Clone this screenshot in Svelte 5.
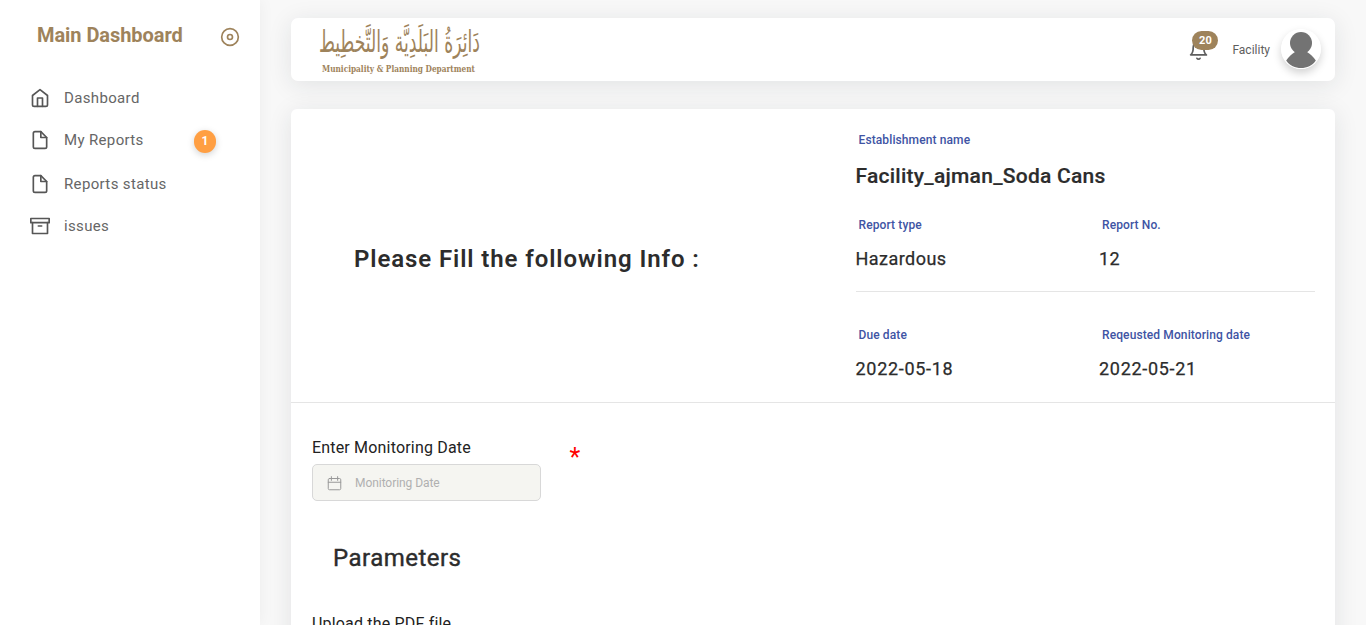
<script>
  const links = [
    { label: 'Dashboard', icon: 'home' },
    { label: 'My Reports', icon: 'file', badge: '1' },
    { label: 'Reports status', icon: 'file' },
    { label: 'issues', icon: 'archive' }
  ];
</script>

<div class="shell">
  <aside>
    <div class="brand">
      <h2>Main Dashboard</h2>
      <svg class="disc" width="20" height="20" viewBox="0 0 24 24"><circle cx="12" cy="12" r="10" /><circle cx="12" cy="12" r="3" /></svg>
    </div>
    <nav>
      {#each links as link}
        <a href="#top" class={link.icon} class:counted={link.badge}>
          <svg width="20" height="20" viewBox="0 0 24 24">
            {#if link.icon === 'home'}
              <path d="M3 9l9-7 9 7v11a2 2 0 0 1-2 2H5a2 2 0 0 1-2-2z" /><path d="M9 22V12h6v10" />
            {:else if link.icon === 'file'}
              <path d="M13 2H6a2 2 0 0 0-2 2v16a2 2 0 0 0 2 2h12a2 2 0 0 0 2-2V9z" /><path d="M13 2v7h7" />
            {:else}
              <path d="M21 8v13H3V8" /><path d="M1 3h22v5H1z" /><path d="M10 12h4" />
            {/if}
          </svg>
          <span>{link.label}</span>
          {#if link.badge}<b>{link.badge}</b>{/if}
        </a>
      {/each}
    </nav>
  </aside>

  <main>
    <header>
      <svg class="logo" width="164" height="52" viewBox="0 0 164 52">
        <text class="ar" x="1" y="0" transform="translate(0 28.5) scale(1 1.42)" textLength="161" lengthAdjust="spacingAndGlyphs" direction="rtl" text-anchor="end">دَائِرَةُ البَلَدِيَّة وَالتَّخطِيط</text>
        <text class="en" x="4" y="49" textLength="153" lengthAdjust="spacingAndGlyphs">Municipality &amp; Planning Department</text>
      </svg>
      <div class="user">
        <div class="bell">
          <svg width="21" height="21" viewBox="0 0 24 24"><path d="M18 8A6 6 0 0 0 6 8c0 7-3 9-3 9h18s-3-2-3-9" /><path d="M13.73 21a2 2 0 0 1-3.46 0" /></svg>
          <span>20</span>
        </div>
        <span class="name">Facility</span>
        <svg class="avatar" width="40" height="40" viewBox="0 0 40 40"><circle cx="20" cy="20" r="20" fill="#fff" /><g class="person"><circle cx="20" cy="14" r="11" /><path d="M5.2 31.5C7.5 28 10.5 25 14 23h12C29.5 25 32.5 28 34.8 31.5C31 37 26 39 20 39S9 37 5.2 31.5z" /></g></svg>
      </div>
    </header>

    <section class="card">
      <div class="summary">
        <h1>Please Fill the following Info :</h1>
        <div class="details">
          <div class="facility"><label>Establishment name</label><strong>Facility_ajman_Soda Cans</strong></div>
          <div class="pair first">
            <div><label>Report type</label><p>Hazardous</p></div>
            <div><label>Report No.</label><p>12</p></div>
          </div>
          <div class="pair">
            <div><label>Due date</label><p>2022-05-18</p></div>
            <div><label>Reqeusted Monitoring date</label><p>2022-05-21</p></div>
          </div>
        </div>
      </div>
      <div class="form">
        <div class="date-row">
          <div>
            <div class="caption">Enter Monitoring Date</div>
            <div class="input">
              <svg width="15" height="15" viewBox="0 0 24 24"><rect x="2" y="4" width="20" height="18" rx="2" /><path d="M7 1v6M17 1v6M2 10h20" /></svg>
              <span>Monitoring Date</span>
            </div>
          </div>
          <span class="star">*</span>
        </div>
        <h3>Parameters</h3>
        <div class="caption">Upload the PDF file</div>
      </div>
    </section>
  </main>
</div>

<style>
  :global(body) { background: #f8f8f8; overflow: hidden; font-family: Roboto, sans-serif; }
  * { box-sizing: border-box; }
  h1, h2, h3, p { margin: 0; }
  .shell { display: flex; height: 625px; overflow: hidden; color: #2c2c2c; }
  aside { width: 260px; flex: none; background: #fff; box-shadow: 0 0 15px rgba(34, 41, 47, 0.05); }
  svg { fill: none; stroke: currentColor; stroke-width: 2; stroke-linecap: round; stroke-linejoin: round; flex: none; }
  .brand { display: flex; justify-content: space-between; align-items: flex-start; padding: 23px 20px 0 37px; height: 77px; color: #9e835b; }
  h2 { font-size: 20px; line-height: 24px; font-weight: 700; letter-spacing: -0.06px; }
  .disc { margin-top: 4px; }
  nav { display: flex; flex-direction: column; }
  a { display: flex; align-items: center; height: 42px; padding: 0 44px 0 30px; color: #666; text-decoration: none; font-size: 15px; letter-spacing: 0.35px; }
  a svg { color: #565656; }
  a + a.file { height: 43px; }
  a span { margin-left: 14px; }
  a.counted span, a.counted svg { margin-bottom: 2px; }
  a b { margin: 2px 0 0 auto; width: 22px; height: 23px; border-radius: 12px; background: #ff9f43; color: #fff; font-size: 12px; line-height: 22px; letter-spacing: 0; text-align: center; box-shadow: 0 2px 7px rgba(0, 0, 0, 0.18); }
  main { flex: 1; padding: 18px 31px 0; }
  header { height: 63px; background: #fff; border-radius: 7px; box-shadow: 0 4px 24px rgba(34, 41, 47, 0.1); display: flex; justify-content: space-between; padding: 5px 14px 0 27px; }
  .logo { overflow: visible; }
  .logo text { stroke: none; fill: #9e835b; }
  .ar { font: 21px "DejaVu Sans", sans-serif; }
  .en { font: bold 9px "DejaVu Serif Condensed", "DejaVu Serif", serif; }
  .user { display: flex; align-items: center; height: 52px; color: #5e5e5e; }
  .bell { position: relative; display: flex; margin: 2px 23px 0 0; }
  .bell span { position: absolute; left: 4px; top: -9px; width: 26px; height: 19px; border-radius: 10px; background: #9e835b; color: #fff; font-size: 11px; font-weight: 700; line-height: 19px; text-align: center; }
  .name { font-size: 12px; margin: 2px 11px 0 0; }
  .avatar { border-radius: 50%; box-shadow: 0 4px 8px rgba(0, 0, 0, 0.18); stroke: none; }
  .person { fill: #737373; }
  .card { margin-top: 28px; height: 560px; background: #fff; border-radius: 6px; box-shadow: 0 4px 24px rgba(34, 41, 47, 0.1); }
  .summary { display: flex; height: 294px; border-bottom: 1px solid #e5e5e5; }
  h1 { width: 564.5px; padding: 135px 0 0 63px; font-size: 24px; line-height: 30px; font-weight: 600; letter-spacing: 0.9px; }
  .details { width: 459px; }
  label { display: block; padding-left: 3px; font-size: 12px; line-height: 18px; font-weight: 500; color: #4054a4; letter-spacing: 0.11px; }
  .facility { height: 85px; padding-top: 22px; }
  .details strong { display: block; margin-top: 14px; font-size: 21px; line-height: 26px; font-weight: 500; letter-spacing: 0.25px; -webkit-text-stroke: 0.2px currentColor; }
  .pair { display: grid; grid-template-columns: 243.5px 1fr; padding-top: 34px; }
  .pair.first { height: 98px; padding-top: 22px; border-bottom: 1px solid #e5e5e5; }
  .pair p { margin-top: 13px; font-size: 18px; line-height: 24px; letter-spacing: 0.7px; -webkit-text-stroke: 0.25px currentColor; }
  .pair.first p { letter-spacing: 0.46px; }
  .form { padding: 34px 21px 0; }
  .date-row { display: flex; }
  .caption { font-size: 16px; line-height: 21px; color: #222; letter-spacing: 0.18px; }
  .input { display: flex; align-items: center; width: 229px; height: 37px; margin-top: 6px; padding-left: 14px; background: #f5f5f1; border: 1px solid #d8d8d8; border-radius: 5px; color: #999; font-size: 12px; }
  .input span { margin-left: 13px; color: #b0b0b0; letter-spacing: -0.06px; }
  .input svg { stroke-width: 1.6; margin-top: 2px; }
  .star { margin: 8px 0 0 28.5px; font-size: 25px; line-height: 25px; color: #f00; }
  h3 { margin: 41px 0 0 21px; font-size: 24px; line-height: 32px; font-weight: 400; letter-spacing: 0.48px; -webkit-text-stroke: 0.4px currentColor; }
  h3 + .caption { margin-top: 39px; }
</style>
